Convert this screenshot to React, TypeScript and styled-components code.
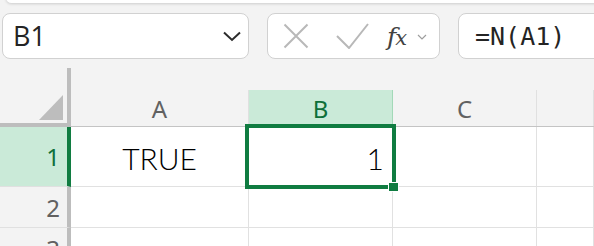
import React from 'react';
import styled, { createGlobalStyle } from 'styled-components';

const GlobalStyle = createGlobalStyle`
  html, body {
    margin: 0;
    padding: 0;
    background: #f3f3f3;
  }
  * {
    box-sizing: border-box;
  }
`;

const green = '#107c41';

const Page = styled.div`
  width: 594px;
  height: 246px;
  overflow: hidden;
  background: #f3f3f3;
  font-family: "Noto Sans", "Open Sans", sans-serif;
`;

const RibbonEdge = styled.div`
  height: 11px;
  margin: -8px -12px 0 6px;
  background: #ffffff;
  border-radius: 8px;
  box-shadow: 0 1px 3px rgba(0, 0, 0, 0.16);
`;

const FormulaBar = styled.div`
  display: flex;
  align-items: stretch;
  height: 46px;
  margin-top: 10px;
  padding-left: 2px;
  gap: 18px;
`;

const Box = styled.div`
  background: #ffffff;
  border: 1px solid #d1d1d1;
  border-radius: 8px;
  display: flex;
  align-items: center;
`;

const NameBox = styled(Box)`
  width: 247px;
  padding: 0 7px 0 10px;
  justify-content: space-between;
`;

const NameText = styled.span`
  font-family: "Open Sans", "Noto Sans", sans-serif;
  font-size: 27px;
  color: #242424;
  line-height: 1;
  margin-top: -1px;
`;

const ButtonsBox = styled(Box)`
  width: 173px;
  padding-left: 15px;
`;

const FxLabel = styled.span`
  font-family: "DejaVu Serif", "Liberation Serif", serif;
  font-style: italic;
  font-size: 25px;
  color: #424242;
  margin-left: 18px;
  line-height: 1;
  letter-spacing: -2px;
  display: flex;
  align-items: baseline;
  & > small {
    font-size: 21px;
    margin-left: 1px;
  }
`;

const FormulaInput = styled(Box)`
  flex: 1;
  margin-right: -20px;
  padding-left: 16px;
  font-family: "DejaVu Sans Mono", "Liberation Mono", monospace;
  font-size: 25px;
  color: #242424;
`;

const Grid = styled.div`
  margin-top: 9px;
  display: grid;
  grid-template-columns: 71px 178px 144px 144px 1fr;
  grid-template-rows: 59px 60px 41px 41px;
`;

const Corner = styled.div`
  background: #f3f3f3;
  border-right: 4px solid #bdbdbd;
  border-bottom: 4px solid #bdbdbd;
  display: flex;
  align-items: flex-end;
  justify-content: flex-end;
  padding: 0 0 3px 0;
`;

const ColHeader = styled.div`
  padding-top: 22px;
  border-bottom: 1px solid #c4c4c4;
  display: flex;
`;

const ColLabel = styled.div<{ $active?: boolean }>`
  flex: 1;
  display: flex;
  align-items: center;
  justify-content: center;
  font-size: 24px;
  color: ${(p) => (p.$active ? '#0e703a' : '#616161')};
  background: ${(p) => (p.$active ? '#caead8' : 'transparent')};
  border-right: 1px solid ${(p) => (p.$active ? '#a3d9b8' : '#e0e0e0')};
`;

const RowHeader = styled.div<{ $active?: boolean }>`
  background: ${(p) => (p.$active ? '#caead8' : '#f3f3f3')};
  border-right: 4px solid ${(p) => (p.$active ? green : '#bdbdbd')};
  border-bottom: 1px solid #e0e0e0;
  display: flex;
  align-items: center;
  justify-content: flex-end;
  padding-right: 7px;
  font-size: 24px;
  color: ${(p) => (p.$active ? '#0e703a' : '#616161')};
`;

const Cell = styled.div<{ $align?: string }>`
  position: relative;
  background: #ffffff;
  border-right: 1px solid #e1e1e1;
  border-bottom: 1px solid #e1e1e1;
  display: flex;
  align-items: center;
  justify-content: ${(p) => p.$align || 'flex-start'};
  padding: 2px 8px 0 8px;
  font-family: "Lato Light", Lato, "Open Sans", sans-serif;
  font-weight: 300;
  font-size: 30px;
  color: #000000;
`;

const Selection = styled.div`
  position: absolute;
  z-index: 2;
  left: -4px;
  top: -3px;
  right: -4px;
  bottom: -3px;
  border: 4px solid ${green};
  pointer-events: none;
`;

const FillHandle = styled.div`
  position: absolute;
  right: -7px;
  bottom: -7px;
  width: 11px;
  height: 10px;
  background: ${green};
  border: 1px solid #ffffff;
`;

const Chevron = () => (
  <svg width="18" height="11" viewBox="0 0 18 11">
    <path d="M1 1.5 L9 9 L17 1.5" fill="none" stroke="#2b2b2b" strokeWidth="2" />
  </svg>
);

const CrossIcon = () => (
  <svg width="26" height="26" viewBox="0 0 26 26">
    <path d="M1.5 1.5 L24.5 24.5 M24.5 1.5 L1.5 24.5" stroke="#b8b8b8" strokeWidth="2" fill="none" />
  </svg>
);

const CheckIcon = () => (
  <svg width="33" height="26" viewBox="0 0 33 26" style={{ marginLeft: 27 }}>
    <path d="M1 13 L13 25 L32 1" stroke="#b8b8b8" strokeWidth="2" fill="none" />
  </svg>
);

const SmallChevron = () => (
  <svg width="10" height="6" viewBox="0 0 10 6" style={{ marginLeft: 12, marginTop: 2 }}>
    <path d="M1 1 L5 5 L9 1" stroke="#9e9e9e" strokeWidth="1.2" fill="none" />
  </svg>
);

const CornerTriangle = () => (
  <svg width="28" height="25" viewBox="0 0 28 25">
    <polygon points="0,25 24,25 24,0" fill="#bdbdbd" />
  </svg>
);

const columns = ['A', 'B', 'C', ''];

export default function App() {
  return (
    <Page>
      <GlobalStyle />
      <RibbonEdge />
      <FormulaBar>
        <NameBox>
          <NameText>B1</NameText>
          <Chevron />
        </NameBox>
        <ButtonsBox>
          <CrossIcon />
          <CheckIcon />
          <FxLabel>
            f<small>x</small>
          </FxLabel>
          <SmallChevron />
        </ButtonsBox>
        <FormulaInput>=N(A1)</FormulaInput>
      </FormulaBar>
      <Grid>
        <Corner>
          <CornerTriangle />
        </Corner>
        {columns.map((c) => (
          <ColHeader key={c || 'D'}>
            <ColLabel $active={c === 'B'}>{c}</ColLabel>
          </ColHeader>
        ))}

        <RowHeader $active>1</RowHeader>
        <Cell $align="center">TRUE</Cell>
        <Cell $align="flex-end">
          1
          <Selection>
            <FillHandle />
          </Selection>
        </Cell>
        <Cell />
        <Cell />

        <RowHeader>2</RowHeader>
        <Cell />
        <Cell />
        <Cell />
        <Cell />

        <RowHeader>3</RowHeader>
        <Cell />
        <Cell />
        <Cell />
        <Cell />
      </Grid>
    </Page>
  );
}
